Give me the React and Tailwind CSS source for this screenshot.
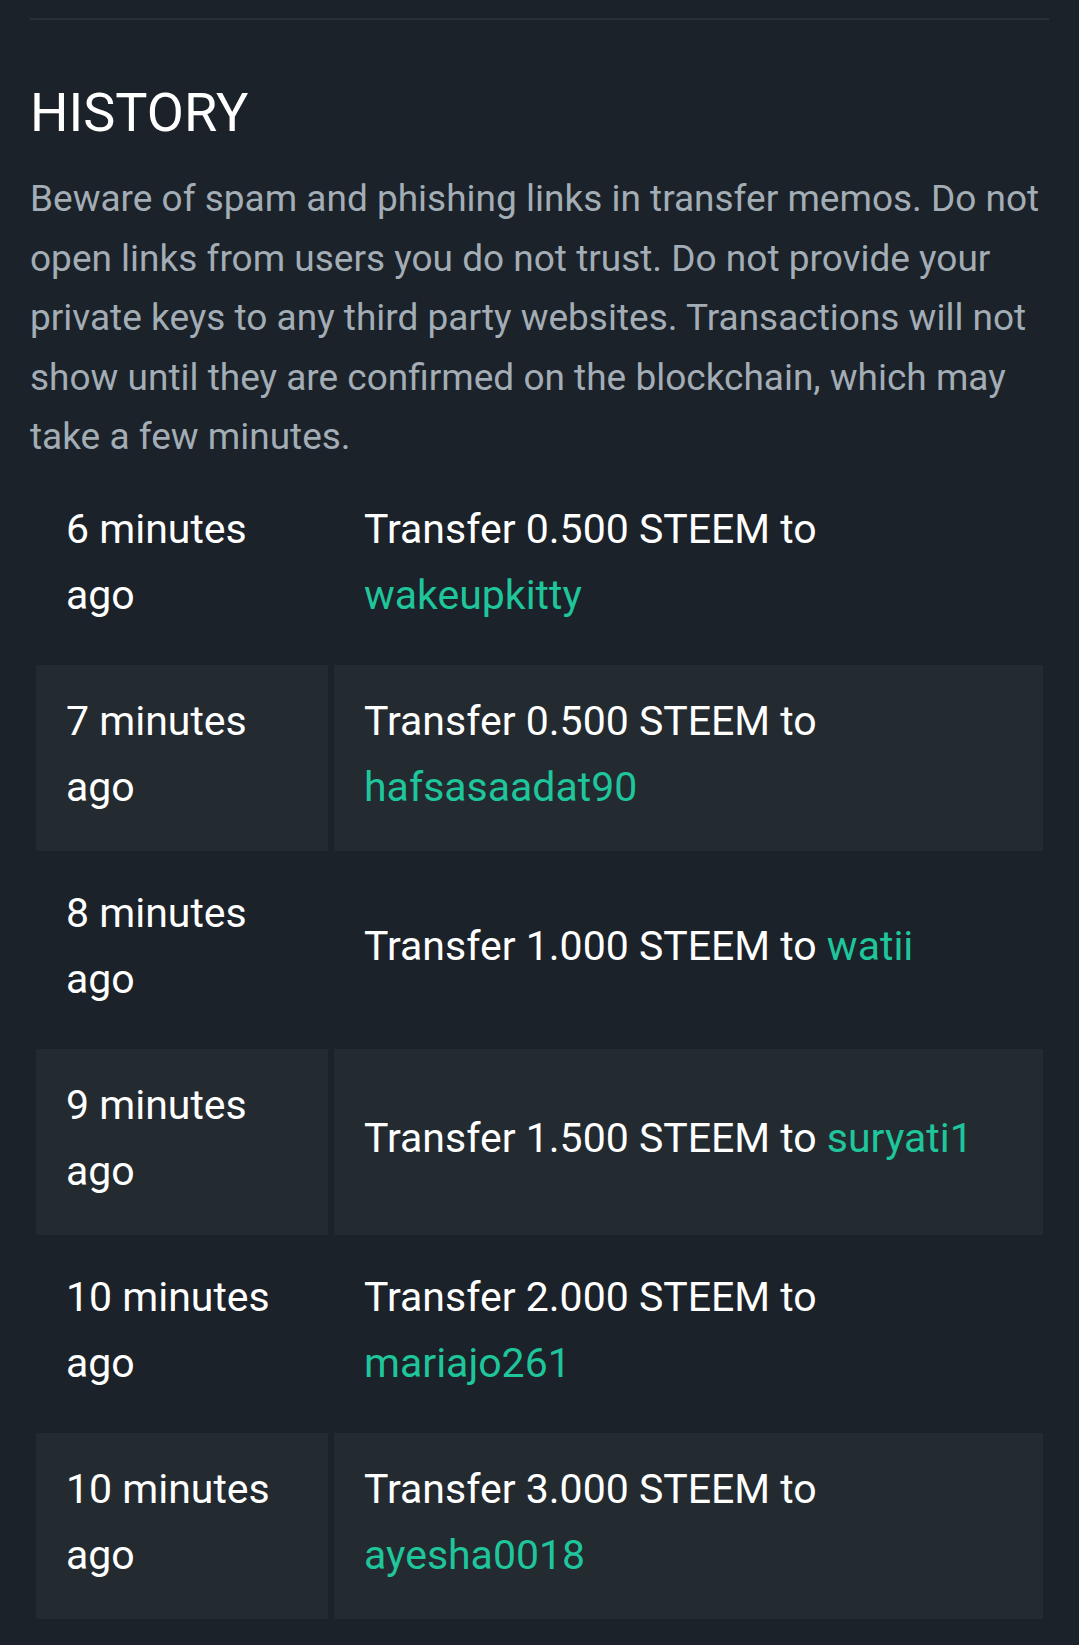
import React from 'react';

const rows = [
  { when: '6 minutes ago', amount: '0.500', to: 'wakeupkitty' },
  { when: '7 minutes ago', amount: '0.500', to: 'hafsasaadat90' },
  { when: '8 minutes ago', amount: '1.000', to: 'watii' },
  { when: '9 minutes ago', amount: '1.500', to: 'suryati1' },
  { when: '10 minutes ago', amount: '2.000', to: 'mariajo261' },
  { when: '10 minutes ago', amount: '3.000', to: 'ayesha0018' },
];

export default function App() {
  return (
    <div className="min-h-[1645px] bg-[#1c2229] px-[30px] pt-[18px] pb-[19px] font-['Roboto',sans-serif]">
      <div className="border-t-2 border-[#283038]" />
      <h2 className="mt-[62px] text-[54px] leading-[62px] text-white font-normal">HISTORY</h2>
      <p className="mt-[25px] text-[37px] leading-[59.5px] text-[#a3adb5]">
        Beware of spam and phishing links in transfer memos. Do not open links from users you do not trust. Do not
        provide your private keys to any third party websites. Transactions will not show until they are confirmed on
        the blockchain, which may take a few minutes.
      </p>
      <table className="w-full table-fixed border-separate border-spacing-[6px] text-[41px] leading-[66px] text-white">
        <colgroup>
          <col className="w-[292px]" />
          <col />
        </colgroup>
        <tbody>
          {rows.map((row, i) => (
            <tr key={i} className={i % 2 === 1 ? 'bg-[#232b31]' : ''}>
              <td className="px-[30px] pt-[23px] pb-[31px] align-middle">{row.when}</td>
              <td className="px-[30px] pt-[23px] pb-[31px] align-middle">
                Transfer {row.amount} STEEM to <span className="text-[#1fc59b]">{row.to}</span>
              </td>
            </tr>
          ))}
        </tbody>
      </table>
    </div>
  );
}
